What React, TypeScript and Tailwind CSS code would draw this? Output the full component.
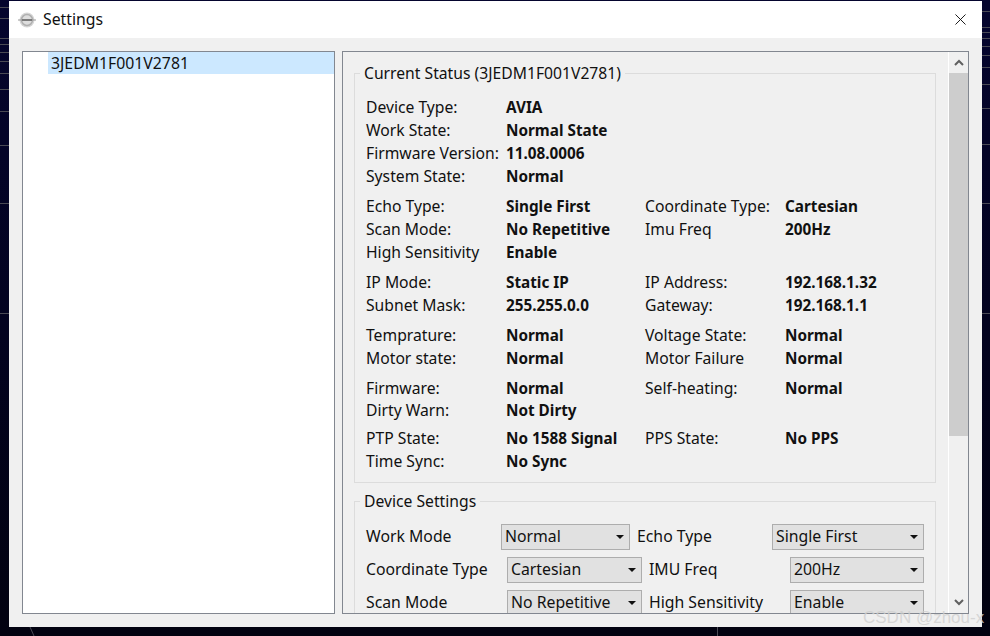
import React from 'react'
import { X } from 'lucide-react'

const font = "font-['Noto_Sans','Open_Sans',sans-serif]"

type Row = { label: string; value: string; label2?: string; value2?: string }

const statusGroups: Row[][] = [
  [
    { label: 'Device Type:', value: 'AVIA' },
    { label: 'Work State:', value: 'Normal State' },
    { label: 'Firmware Version:', value: '11.08.0006' },
    { label: 'System State:', value: 'Normal' },
  ],
  [
    { label: 'Echo Type:', value: 'Single First', label2: 'Coordinate Type:', value2: 'Cartesian' },
    { label: 'Scan Mode:', value: 'No Repetitive', label2: 'Imu Freq', value2: '200Hz' },
    { label: 'High Sensitivity', value: 'Enable' },
  ],
  [
    { label: 'IP Mode:', value: 'Static IP', label2: 'IP Address:', value2: '192.168.1.32' },
    { label: 'Subnet Mask:', value: '255.255.0.0', label2: 'Gateway:', value2: '192.168.1.1' },
  ],
  [
    { label: 'Temprature:', value: 'Normal', label2: 'Voltage State:', value2: 'Normal' },
    { label: 'Motor state:', value: 'Normal', label2: 'Motor Failure', value2: 'Normal' },
  ],
  [
    { label: 'Firmware:', value: 'Normal', label2: 'Self-heating:', value2: 'Normal' },
    { label: 'Dirty Warn:', value: 'Not Dirty' },
  ],
  [
    { label: 'PTP State:', value: 'No 1588 Signal', label2: 'PPS State:', value2: 'No PPS' },
    { label: 'Time Sync:', value: 'No Sync' },
  ],
]

const StatusRow = ({ label, value, label2, value2 }: Row) => (
  <div className="flex h-[23px] items-center leading-[23px] text-[#111]">
    <span className="w-[140px] whitespace-nowrap pt-[2px] text-[15.7px]">{label}</span>
    <span className="w-[139px] pt-px text-[15.3px] font-bold">{value}</span>
    <span className="w-[140px] whitespace-nowrap pt-[2px] text-[15.7px]">{label2}</span>
    <span className="pt-px text-[15.3px] font-bold">{value2}</span>
  </div>
)

const Combo = ({ value, width }: { value: string; width: string }) => (
  <div className={`flex h-[26px] shrink-0 items-center justify-between border border-[#adadad] bg-[#e1e1e1] pl-[3px] pr-[5px] text-[15.8px] text-[#111] ${width}`}>
    <span>{value}</span>
    <svg width="8" height="4" viewBox="0 0 8 4"><path d="M0 0h8L4 4z" fill="#111" /></svg>
  </div>
)

const Chevron = ({ d }: { d: string }) => (
  <svg width="10" height="7" viewBox="0 0 10 7" fill="none" stroke="#606060" strokeWidth="2"><path d={d} /></svg>
)

// desktop wallpaper strokes showing round the dialog
const Backdrop = () => (
  <svg className="absolute inset-0" width="990" height="636" viewBox="0 0 990 636" fill="none" stroke="#4a4a55" strokeWidth="1">
    {[7, 18, 38, 44, 52, 61, 73, 89, 111, 145, 203, 313].map((y) => (
      <path key={y} d={`M0 ${y + 0.5}h9`} />
    ))}
    {[11, 27, 32, 38, 46, 55, 67, 84, 108, 144, 203, 313].map((y) => (
      <path key={y} d={`M982 ${y + 0.5}h8`} />
    ))}
    <path d="M30 627l4 9M717.5 627v9" />
  </svg>
)

const App: React.FC = () => {
  return (
    <div className={`relative h-[636px] w-[990px] overflow-hidden bg-gradient-to-b from-[#05052e] via-[#030320] to-[#020210] pb-[9px] pl-[9px] pr-[8px] pt-px ${font}`}>
      <Backdrop />
      <div className="relative flex h-full flex-col bg-[#f0f0f0]">
        <div className="flex h-[37px] shrink-0 items-center bg-white pl-[9px] pr-[12px]">
          <svg width="18" height="18" viewBox="0 0 18 18" className="mr-[7px]">
            <circle cx="9" cy="9" r="7.5" fill="#d6d6d6" />
            <circle cx="9" cy="9" r="5.5" fill="#dedede" stroke="#b0b0b0" strokeWidth="1.5" />
            <path d="M0 9h18" stroke="#9a9a9a" strokeWidth="1" />
            <path d="M4 9h10" stroke="#666" strokeWidth="1.5" />
          </svg>
          <span className="flex-1 text-[15.8px] text-[#111]">Settings</span>
          <X size={19} strokeWidth={1.2} color="#111" />
        </div>
        <div className="flex min-h-0 flex-1 gap-[7px] pb-[13px] pl-[13px] pr-[13px] pt-[13px]">
          <div className="h-[563px] w-[313px] shrink-0 border border-[#828790] bg-white pl-[25px]">
            <div className="h-[22px] bg-[#cce8ff] pl-[3px] text-[15.8px] leading-[22px] text-[#111]">3JEDM1F001V2781</div>
          </div>
          <div className="flex h-[563px] min-w-0 flex-1 border border-[#828790] bg-[#f0f0f0]">
            <div className="min-w-0 flex-1 overflow-hidden pl-[11px] pr-[12px] pt-[21px]">
              <div className="relative border border-[#dcdcdc] pb-[10px] pl-[11px] pt-[21px]">
                <span className="absolute left-[5px] top-[-11px] bg-[#f0f0f0] px-[4px] text-[15.7px] leading-[20px] text-[#111]">Current Status (3JEDM1F001V2781)</span>
                <div className="flex flex-col gap-[7px]">
                  {statusGroups.map((rows, i) => (
                    <div key={i} className={i === 4 ? 'mb-[-2px] h-[45px]' : ''}>
                      {rows.map((r, j) => (
                        <div key={r.label} className={i === 4 && j === 1 ? 'mt-[-1px]' : ''}>
                          <StatusRow {...r} />
                        </div>
                      ))}
                    </div>
                  ))}
                </div>
              </div>
              <div className="relative mt-[18px] h-[200px] border border-[#dcdcdc] pl-[11px] pr-[11px] pt-[22px]">
                <span className="absolute left-[5px] top-[-11px] bg-[#f0f0f0] px-[4px] text-[15.7px] leading-[20px] text-[#111]">Device Settings</span>
                <div className="flex flex-col gap-[7px] text-[15.8px] text-[#111]">
                  <div className="flex items-center">
                    <span className="w-[135px]">Work Mode</span>
                    <Combo value="Normal" width="w-[129px]" />
                    <span className="ml-[7px] w-[135px]">Echo Type</span>
                    <Combo value="Single First" width="w-[152px]" />
                  </div>
                  <div className="flex items-center">
                    <span className="w-[141px]">Coordinate Type</span>
                    <Combo value="Cartesian" width="w-[135px]" />
                    <span className="ml-[7px] w-[141px]">IMU Freq</span>
                    <Combo value="200Hz" width="w-[134px]" />
                  </div>
                  <div className="flex items-center">
                    <span className="w-[141px]">Scan Mode</span>
                    <Combo value="No Repetitive" width="w-[135px]" />
                    <span className="ml-[7px] w-[141px]">High Sensitivity</span>
                    <Combo value="Enable" width="w-[134px]" />
                  </div>
                </div>
              </div>
            </div>
            <div className="flex w-[20px] shrink-0 flex-col border-l border-white">
              <div className="flex h-[21px] items-center justify-center"><Chevron d="M1 6l4-4 4 4" /></div>
              <div className="h-[363px] bg-[#cdcdcd]" />
              <div className="flex-1" />
              <div className="flex h-[21px] items-center justify-center"><Chevron d="M1 1l4 4 4-4" /></div>
            </div>
          </div>
        </div>
      </div>
      <span className="absolute left-[863px] top-[607px] whitespace-nowrap font-['Liberation_Sans',sans-serif] text-[17px] leading-[22px] text-[#cfcfcf]/80">CSDN @zhou-x</span>
    </div>
  )
}

export default App
